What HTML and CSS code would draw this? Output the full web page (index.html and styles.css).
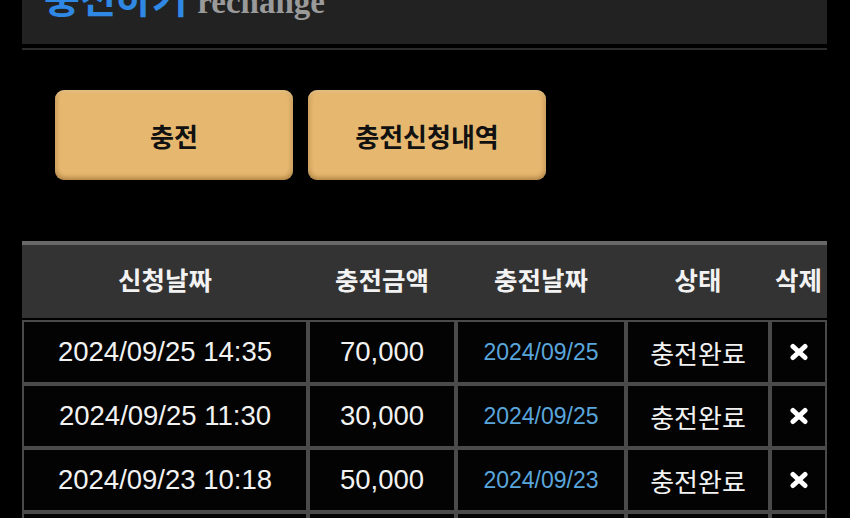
FILE: index.html
```html
<!DOCTYPE html>
<html lang="ko">
<head>
    <meta charset="UTF-8">
    <meta name="viewport" content="width=device-width, initial-scale=1.0">
    <title>충전하기</title>
    <link rel="stylesheet" href="styles.css">
</head>
<body>
    <div class="wrap">
        <div class="title-bar">
            <h2 class="title"><span class="title-ko">충전하기</span> <span class="title-en">rechange</span></h2>
        </div>
        <div class="rule"></div>

        <div class="tabs">
            <button class="tab">충전</button>
            <button class="tab">충전신청내역</button>
        </div>

        <table class="history">
            <colgroup>
                <col style="width: 286px">
                <col style="width: 148px">
                <col style="width: 170px">
                <col style="width: 144px">
                <col style="width: 57px">
            </colgroup>
            <thead>
                <tr>
                    <th>신청날짜</th>
                    <th>충전금액</th>
                    <th>충전날짜</th>
                    <th>상태</th>
                    <th>삭제</th>
                </tr>
            </thead>
            <tbody>
                <tr>
                    <td class="num">2024/09/25 14:35</td>
                    <td class="num">70,000</td>
                    <td class="done-date">2024/09/25</td>
                    <td class="status">충전완료</td>
                    <td><button class="del"><svg width="20" height="18" viewBox="0 0 20 18"><path d="M4 3.5 L16 14.5 M16 3.5 L4 14.5" stroke="#fff" stroke-width="5" stroke-linecap="round"/></svg></button></td>
                </tr>
                <tr>
                    <td class="num">2024/09/25 11:30</td>
                    <td class="num">30,000</td>
                    <td class="done-date">2024/09/25</td>
                    <td class="status">충전완료</td>
                    <td><button class="del"><svg width="20" height="18" viewBox="0 0 20 18"><path d="M4 3.5 L16 14.5 M16 3.5 L4 14.5" stroke="#fff" stroke-width="5" stroke-linecap="round"/></svg></button></td>
                </tr>
                <tr>
                    <td class="num">2024/09/23 10:18</td>
                    <td class="num">50,000</td>
                    <td class="done-date">2024/09/23</td>
                    <td class="status">충전완료</td>
                    <td><button class="del"><svg width="20" height="18" viewBox="0 0 20 18"><path d="M4 3.5 L16 14.5 M16 3.5 L4 14.5" stroke="#fff" stroke-width="5" stroke-linecap="round"/></svg></button></td>
                </tr>
                <tr>
                    <td class="num">2024/09/20 16:02</td>
                    <td class="num">50,000</td>
                    <td class="done-date">2024/09/20</td>
                    <td class="status">충전완료</td>
                    <td><button class="del"><svg width="20" height="18" viewBox="0 0 20 18"><path d="M4 3.5 L16 14.5 M16 3.5 L4 14.5" stroke="#fff" stroke-width="5" stroke-linecap="round"/></svg></button></td>
                </tr>
            </tbody>
        </table>
    </div>
</body>
</html>
```

FILE: styles.css
```css
body {
    margin: 0;
    background-color: #000;
    font-family: "Liberation Sans", "Noto Sans CJK KR", sans-serif;
    color: #f2f2f2;
    overflow: hidden;
}
.wrap {
    width: 805px;
    margin-left: 22px;
}

/* page title, scrolled partly out of view */
.title-bar {
    box-sizing: border-box;
    height: 65px;
    margin-top: -21px;
    padding: 0 22px;
    background-color: #222;
    overflow: hidden;
}
.title {
    margin: 0;
    height: 35px;
    line-height: 35px;
    font-weight: normal;
    white-space: nowrap;
}
.title-ko {
    font-family: "Noto Sans CJK KR", sans-serif;
    font-size: 39px;
    font-weight: bold;
    color: #2f88e3;
}
.title-en {
    margin-left: 3px;
    font-family: "Liberation Serif", serif;
    font-size: 33px;
    font-weight: bold;
    color: #9a9a9a;
}
.rule {
    margin-top: 4px;
    height: 2px;
    background-color: #2b2b2b;
}

/* tab buttons */
.tabs {
    display: flex;
    gap: 15px;
    margin-top: 40px;
    padding-left: 33px;
}
.tab {
    width: 238px;
    height: 90px;
    border: none;
    border-radius: 9px;
    background-color: #e6b86f;
    box-shadow: inset 0 2px 3px rgba(255, 240, 200, 0.35), inset 0 -3px 5px rgba(90, 50, 0, 0.28), inset 2px 0 4px rgba(90, 50, 0, 0.12), inset -2px 0 4px rgba(90, 50, 0, 0.12);
    font-family: "Noto Sans CJK KR", sans-serif;
    font-size: 26px;
    font-weight: bold;
    color: #111;
    cursor: pointer;
}

/* history table */
.history {
    width: 805px;
    margin-top: 61px;
    table-layout: fixed;
    border-collapse: separate;
    border-spacing: 0;
}
.history thead tr {
    height: 79px;
}
.history th {
    padding: 0 0 6px;
    background-color: #333;
    border-top: 4px solid #686868;
    border-bottom: 2px solid #000;
    font-family: "Noto Sans CJK KR", sans-serif;
    font-size: 25.5px;
    font-weight: bold;
    color: #f2f2f2;
    text-align: center;
}
.history tbody tr {
    height: 64px;
}
.history td {
    padding: 0;
    border: 2px solid #4a4a4a;
    background-color: #030303;
    text-align: center;
    white-space: nowrap;
}
.num {
    font-size: 27.5px;
}
.done-date {
    font-size: 23px;
    color: #5aa6dc;
}
.status {
    font-family: "Noto Sans CJK KR", sans-serif;
    font-size: 26px;
}
.del {
    display: block;
    margin: 0 auto;
    padding: 0;
    border: none;
    background: none;
    cursor: pointer;
}
.del svg {
    display: block;
}
```
